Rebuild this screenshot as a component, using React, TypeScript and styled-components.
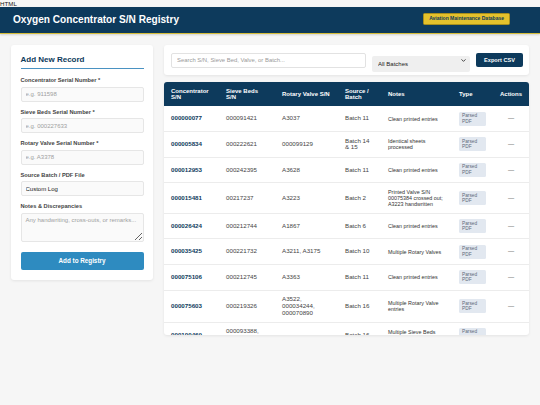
import styled, { createGlobalStyle } from "styled-components";
import { useState } from "react";
import { ChevronDown } from "lucide-react";

const GlobalStyle = createGlobalStyle`
  body {
    margin: 0;
    background: #f6f6f6;
    font-family: "Liberation Sans", Arial, sans-serif;
  }
  * { box-sizing: border-box; }
`;

const NAVY = "#0d3a5c";

type Row = {
  sn: string;
  sieve: string;
  valve: string;
  batch: string;
  notes: string;
};

const rows: Row[] = [
  { sn: "000000077", sieve: "000091421", valve: "A3037", batch: "Batch 11", notes: "Clean printed entries" },
  { sn: "000005834", sieve: "000222621", valve: "000099129", batch: "Batch 14 & 15", notes: "Identical sheets processed" },
  { sn: "000012953", sieve: "000242395", valve: "A3628", batch: "Batch 11", notes: "Clean printed entries" },
  { sn: "000015481", sieve: "00217237", valve: "A3223", batch: "Batch 2", notes: "Printed Valve S/N 00075384 crossed out; A3223 handwritten" },
  { sn: "000026424", sieve: "000212744", valve: "A1867", batch: "Batch 6", notes: "Clean printed entries" },
  { sn: "000035425", sieve: "000221732", valve: "A3211, A3175", batch: "Batch 10", notes: "Multiple Rotary Valves" },
  { sn: "000075106", sieve: "000212745", valve: "A3363", batch: "Batch 11", notes: "Clean printed entries" },
  { sn: "000075603", sieve: "000219326", valve: "A3522, 000034244, 000070890", batch: "Batch 16", notes: "Multiple Rotary Valve entries" },
  { sn: "000100469", sieve: "000093388, 000093389", valve: "", batch: "Batch 16", notes: "Multiple Sieve Beds entries" },
];

const colWidths = [55, 56, 63, 43, 71, 41, 36];

const App = () => {
  const [search, setSearch] = useState("");
  const [batch, setBatch] = useState("all");
  const [batchName, setBatchName] = useState("Custom Log");

  return (
    <>
      <GlobalStyle />
      <DocLabel>HTML</DocLabel>
      <Header>
        <h1>Oxygen Concentrator S/N Registry</h1>
        <Badge>Aviation Maintenance Database</Badge>
      </Header>
      <Main>
        <FormCard>
          <CardTitle>Add New Record</CardTitle>
          <Field>
            <label>Concentrator Serial Number *</label>
            <Input placeholder="e.g. 911598" />
          </Field>
          <Field>
            <label>Sieve Beds Serial Number *</label>
            <Input placeholder="e.g. 000227633" />
          </Field>
          <Field>
            <label>Rotary Valve Serial Number *</label>
            <Input placeholder="e.g. A3378" />
          </Field>
          <Field>
            <label>Source Batch / PDF File</label>
            <Input value={batchName} onChange={(e) => setBatchName(e.target.value)} />
          </Field>
          <Field>
            <label>Notes &amp; Discrepancies</label>
            <TextArea placeholder="Any handwriting, cross-outs, or remarks..." />
          </Field>
          <PrimaryButton type="button">Add to Registry</PrimaryButton>
        </FormCard>

        <RightColumn>
          <Toolbar>
            <SearchInput
              placeholder="Search S/N, Sieve Bed, Valve, or Batch..."
              value={search}
              onChange={(e) => setSearch(e.target.value)}
            />
            <SelectWrap>
              <select value={batch} onChange={(e) => setBatch(e.target.value)}>
                <option value="all">All Batches</option>
                <option value="11">Batch 11</option>
              </select>
              <ChevronDown size={7} strokeWidth={3} />
            </SelectWrap>
            <ExportButton type="button">Export CSV</ExportButton>
          </Toolbar>

          <TableCard>
            <Table>
              <colgroup>
                {colWidths.map((w, i) => (
                  <col key={i} style={{ width: w }} />
                ))}
              </colgroup>
              <thead>
                <tr>
                  <th>Concentrator S/N</th>
                  <th>Sieve Beds S/N</th>
                  <th>Rotary Valve S/N</th>
                  <th>Source / Batch</th>
                  <th>Notes</th>
                  <th>Type</th>
                  <th className="center">Actions</th>
                </tr>
              </thead>
              <tbody>
                {rows.map((r) => (
                  <tr key={r.sn}>
                    <td className="sn">{r.sn}</td>
                    <td>{r.sieve}</td>
                    <td>{r.valve}</td>
                    <td>{r.batch}</td>
                    <td className="notes">{r.notes}</td>
                    <td>
                      <TypeTag>Parsed PDF</TypeTag>
                    </td>
                    <td className="center">—</td>
                  </tr>
                ))}
              </tbody>
            </Table>
          </TableCard>
        </RightColumn>
      </Main>
    </>
  );
};

export default App;

const DocLabel = styled.div`
  font-size: 6.2px;
  line-height: 7px;
  height: 7px;
  color: #222;
  overflow: hidden;
`;

const Header = styled.header`
  height: 26.5px;
  background: ${NAVY};
  border-bottom: 1.5px solid #d6bd3a;
  box-shadow: 0 1px 2px rgba(0, 0, 0, 0.15);
  display: flex;
  align-items: center;
  justify-content: space-between;
  padding: 0 30px 1px 13px;

  h1 {
    margin: 0;
    color: #fff;
    font-size: 10.1px;
    font-weight: 700;
  }
`;

const Badge = styled.span`
  background: #e4c12c;
  color: ${NAVY};
  font-size: 5px;
  font-weight: 700;
  line-height: 1.15;
  padding: 2px 5px;
  border-radius: 1.5px;
  border: 0.5px solid #a88f1c;
`;

const Main = styled.main`
  display: grid;
  grid-template-columns: 142px 1fr;
  gap: 11px;
  padding: 11.5px 11px;
  align-items: start;
`;

const Card = styled.div`
  background: #fff;
  border-radius: 3px;
  box-shadow: 0 1px 3px rgba(0, 0, 0, 0.08);
`;

const FormCard = styled(Card)`
  padding: 10px 9.5px;
`;

const CardTitle = styled.h2`
  margin: 0 0 8px;
  font-size: 8px;
  line-height: 9px;
  font-weight: 700;
  color: ${NAVY};
  padding-bottom: 4px;
  border-bottom: 1px solid #4a92c2;
`;

const Field = styled.div`
  display: flex;
  flex-direction: column;
  margin-bottom: 7px;

  label {
    font-size: 5.7px;
    line-height: 6.5px;
    font-weight: 700;
    color: #444;
    margin-bottom: 3px;
  }
`;

const Input = styled.input`
  height: 15px;
  width: 100%;
  border: 1px solid #e6e6e6;
  border-radius: 2px;
  background: #fafafa;
  padding: 0 4px;
  font-family: inherit;
  font-size: 6px;
  color: #222;
  outline: none;

  &::placeholder {
    color: #a0a0a0;
  }
`;

const TextArea = styled.textarea`
  height: 29px;
  width: 100%;
  border: 1px solid #e6e6e6;
  border-radius: 2px;
  background: #fafafa;
  padding: 3px 4px;
  font-family: inherit;
  font-size: 6px;
  color: #222;
  outline: none;

  &::placeholder {
    color: #a0a0a0;
  }
`;

const PrimaryButton = styled.button`
  width: 100%;
  height: 18px;
  margin-top: 3px;
  border: none;
  border-radius: 2px;
  background: #2e8bc0;
  color: #fff;
  font-family: inherit;
  font-size: 6.3px;
  font-weight: 700;
  cursor: pointer;
`;

const RightColumn = styled.section`
  display: flex;
  flex-direction: column;
  gap: 7px;
`;

const Toolbar = styled(Card)`
  height: 30px;
  padding: 0 6px 0 7px;
  display: flex;
  align-items: center;
  gap: 6px;
`;

const SearchInput = styled.input`
  flex: 1;
  height: 15px;
  border: 1px solid #e2e2e2;
  border-radius: 2px;
  background: #fff;
  padding: 0 5px;
  font-family: inherit;
  font-size: 5.9px;
  outline: none;

  &::placeholder {
    color: #9a9a9a;
  }
`;

const SelectWrap = styled.div`
  position: relative;
  width: 98px;
  height: 16px;

  select {
    appearance: none;
    width: 100%;
    height: 100%;
    border: none;
    border-radius: 2px;
    background: #efefef;
    padding: 0 6px;
    font-family: inherit;
    font-size: 6px;
    color: #222;
    outline: none;
  }

  svg {
    position: absolute;
    right: 3.5px;
    top: 4.5px;
    color: #333;
    pointer-events: none;
  }
`;

const ExportButton = styled.button`
  width: 47px;
  height: 14.5px;
  border: none;
  border-radius: 2px;
  background: ${NAVY};
  color: #fff;
  font-family: inherit;
  font-size: 5.6px;
  font-weight: 700;
  cursor: pointer;
`;

const TableCard = styled(Card)`
  height: 253px;
  overflow: hidden;
`;

const Table = styled.table`
  width: 100%;
  table-layout: fixed;
  border-collapse: collapse;

  th {
    background: ${NAVY};
    color: #fff;
    font-size: 6px;
    font-weight: 700;
    line-height: 1.1;
    text-align: left;
    vertical-align: middle;
    padding: 5.6px 7px;
  }

  td {
    font-size: 6.2px;
    line-height: 1.1;
    color: #444;
    vertical-align: middle;
    padding: 5.3px 7px;
    border-bottom: 1px solid #ececec;
  }

  td.sn {
    color: ${NAVY};
    font-weight: 700;
  }

  td.notes {
    font-size: 5.4px;
    line-height: 1.17;
    color: #333;
  }

  .center {
    text-align: center;
  }
`;

const TypeTag = styled.span`
  display: inline-block;
  background: #e2e8f0;
  color: #5f6b7a;
  font-size: 4.8px;
  line-height: 1.15;
  padding: 1.5px 3px;
  border-radius: 1.5px;
`;
